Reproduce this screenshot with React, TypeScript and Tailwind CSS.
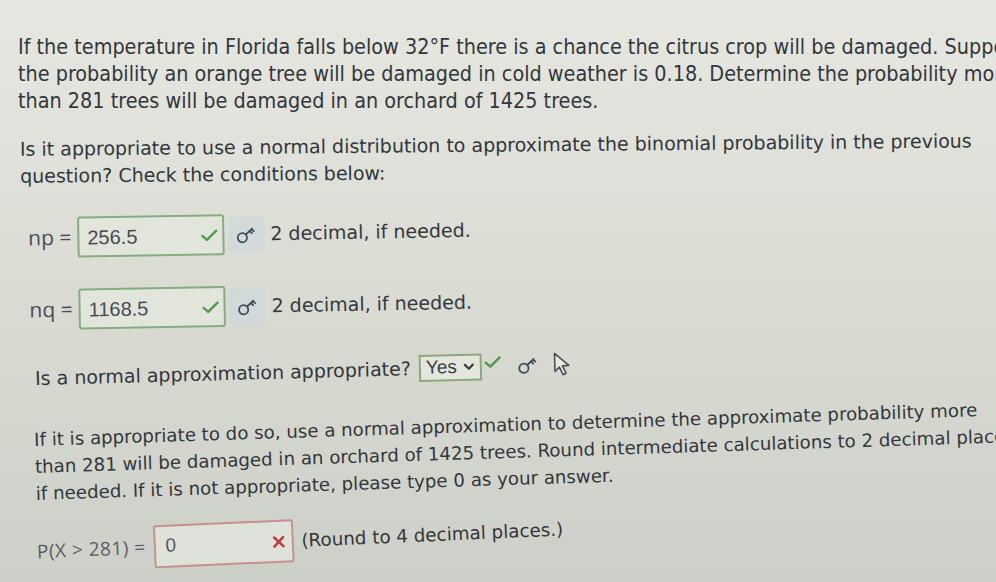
import React from 'react';

const KeyIcon = ({ boxed = true }: { boxed?: boolean }) => (
  <div
    className={`flex h-[36px] w-[36px] items-center justify-center rounded-[3px] ${
      boxed ? 'bg-[#cfd8da]/70' : ''
    }`}
  >
    <svg width="22" height="20" viewBox="0 0 22 20" fill="none" stroke="#3f4e5c" strokeWidth="1.8" strokeLinecap="round">
      <circle cx="7" cy="13" r="4.6" />
      <path d="M10.4 9.8 L17 4" />
      <path d="M14.2 6.4 L16.6 8.6" />
      <path d="M16.2 4.7 L18.6 6.6" />
    </svg>
  </div>
);

const Check = () => (
  <svg width="18" height="14" viewBox="0 0 18 14" fill="none" stroke="#4f9a4f" strokeWidth="2.4" strokeLinecap="round" strokeLinejoin="round">
    <path d="M2 7.5 L6.5 11.5 L16 2.5" />
  </svg>
);

const Cross = () => (
  <svg width="14" height="14" viewBox="0 0 14 14" fill="none" stroke="#c0393f" strokeWidth="2.6" strokeLinecap="round">
    <path d="M2.5 2.5 L11.5 11.5 M11.5 2.5 L2.5 11.5" />
  </svg>
);

const Cursor = () => (
  <svg width="22" height="26" viewBox="0 0 22 26" fill="#e6e8e2" stroke="#4c5258" strokeWidth="1.6" strokeLinejoin="round">
    <path d="M3 2 L3 20 L7.5 15.8 L11 23.5 L14 22 L10.6 14.6 L17 14.3 Z" />
  </svg>
);

const AnswerRow = ({ label, value }: { label: string; value: string }) => (
  <div className="flex items-center">
    <span className="w-[62px] text-right text-[21px] text-[#4a4e52]" style={{ fontFamily: '"Open Sans", sans-serif' }}>
      {label}
    </span>
    <div className="ml-[6px] flex h-[41px] w-[147px] items-center justify-between rounded-[3px] border-2 border-[#86ad80] bg-[#e1e5dc] pl-[8px] pr-[4px]">
      <span className="text-[20px] text-[#474b4e]" style={{ fontFamily: '"Liberation Sans", sans-serif' }}>
        {value}
      </span>
      <Check />
    </div>
    <div className="ml-[4px]">
      <KeyIcon />
    </div>
    <span className="ml-[6px] text-[19px] text-[#35393c]" style={{ fontFamily: '"DejaVu Sans", sans-serif' }}>
      2 decimal, if needed.
    </span>
  </div>
);

export default function App() {
  return (
    <div
      className="h-[582px] w-[996px] overflow-hidden bg-gradient-to-b from-[#e6e7e1] via-[#dadcd4] to-[#cdd0c8] text-[#33373a]"
      style={{ fontFamily: '"DejaVu Sans", sans-serif' }}
    >
      <div className="pl-[18px] pt-[33px] text-[21.4px] leading-[27px]" style={{ fontFamily: '"DejaVu Sans Condensed", "DejaVu Sans", sans-serif' }}>
        <p className="whitespace-nowrap">If the temperature in Florida falls below 32°F there is a chance the citrus crop will be damaged. Suppose</p>
        <p className="whitespace-nowrap">the probability an orange tree will be damaged in cold weather is 0.18. Determine the probability more</p>
        <p className="whitespace-nowrap">than 281 trees will be damaged in an orchard of 1425 trees.</p>
      </div>

      <div className="mt-[22px] origin-left -rotate-[0.5deg] pl-[20px] text-[19px] leading-[27px]">
        <p className="whitespace-nowrap">Is it appropriate to use a normal distribution to approximate the binomial probability in the previous</p>
        <p className="whitespace-nowrap">question? Check the conditions below:</p>
      </div>

      <div className="mt-[28px] flex origin-left -rotate-[1deg] flex-col gap-[31px] pl-[10px]">
        <AnswerRow label="np =" value="256.5" />
        <AnswerRow label="nq =" value="1168.5" />
      </div>

      <div className="mt-[30px] flex origin-left -rotate-[1.5deg] items-center pl-[35px]">
        <span className="text-[19px]">Is a normal approximation appropriate?</span>
        <div className="ml-[8px] flex h-[27px] items-center gap-[6px] border-2 border-[#8aa878] bg-[#e4e7de] px-[5px]">
          <span className="text-[19px] text-[#3b3f42]" style={{ fontFamily: '"Liberation Sans", sans-serif' }}>
            Yes
          </span>
          <svg width="12" height="8" viewBox="0 0 12 8" fill="none" stroke="#3a3e42" strokeWidth="2.2" strokeLinecap="round" strokeLinejoin="round">
            <path d="M2 2 L6 6 L10 2" />
          </svg>
        </div>
        <div className="ml-[2px] -mt-[8px]">
          <Check />
        </div>
        <div className="ml-[8px]">
          <KeyIcon boxed={false} />
        </div>
        <div className="ml-[6px]">
          <Cursor />
        </div>
      </div>

      <div className="mt-[30px] origin-left -rotate-[1.8deg] pl-[35px] text-[18.2px] leading-[27px]">
        <p className="whitespace-nowrap">If it is appropriate to do so, use a normal approximation to determine the approximate probability more</p>
        <p className="whitespace-nowrap">than 281 will be damaged in an orchard of 1425 trees. Round intermediate calculations to 2 decimal places</p>
        <p className="whitespace-nowrap">if needed. If it is not appropriate, please type 0 as your answer.</p>
      </div>

      <div className="mt-[24px] flex origin-left -rotate-[2.5deg] items-center pl-[37px]">
        <span className="text-[19px] tracking-[0.5px] text-[#5a5e62]" style={{ fontFamily: '"Open Sans", sans-serif' }}>
          P(X &gt; 281) =
        </span>
        <div className="ml-[8px] flex h-[43px] w-[140px] items-center justify-between rounded-[3px] border-2 border-[#c49090] bg-[#dfe2db] pl-[10px] pr-[6px]">
          <span className="text-[19px] text-[#55595c]" style={{ fontFamily: '"Liberation Sans", sans-serif' }}>
            0
          </span>
          <Cross />
        </div>
        <span className="ml-[8px] text-[18.3px]">(Round to 4 decimal places.)</span>
      </div>
    </div>
  );
}
